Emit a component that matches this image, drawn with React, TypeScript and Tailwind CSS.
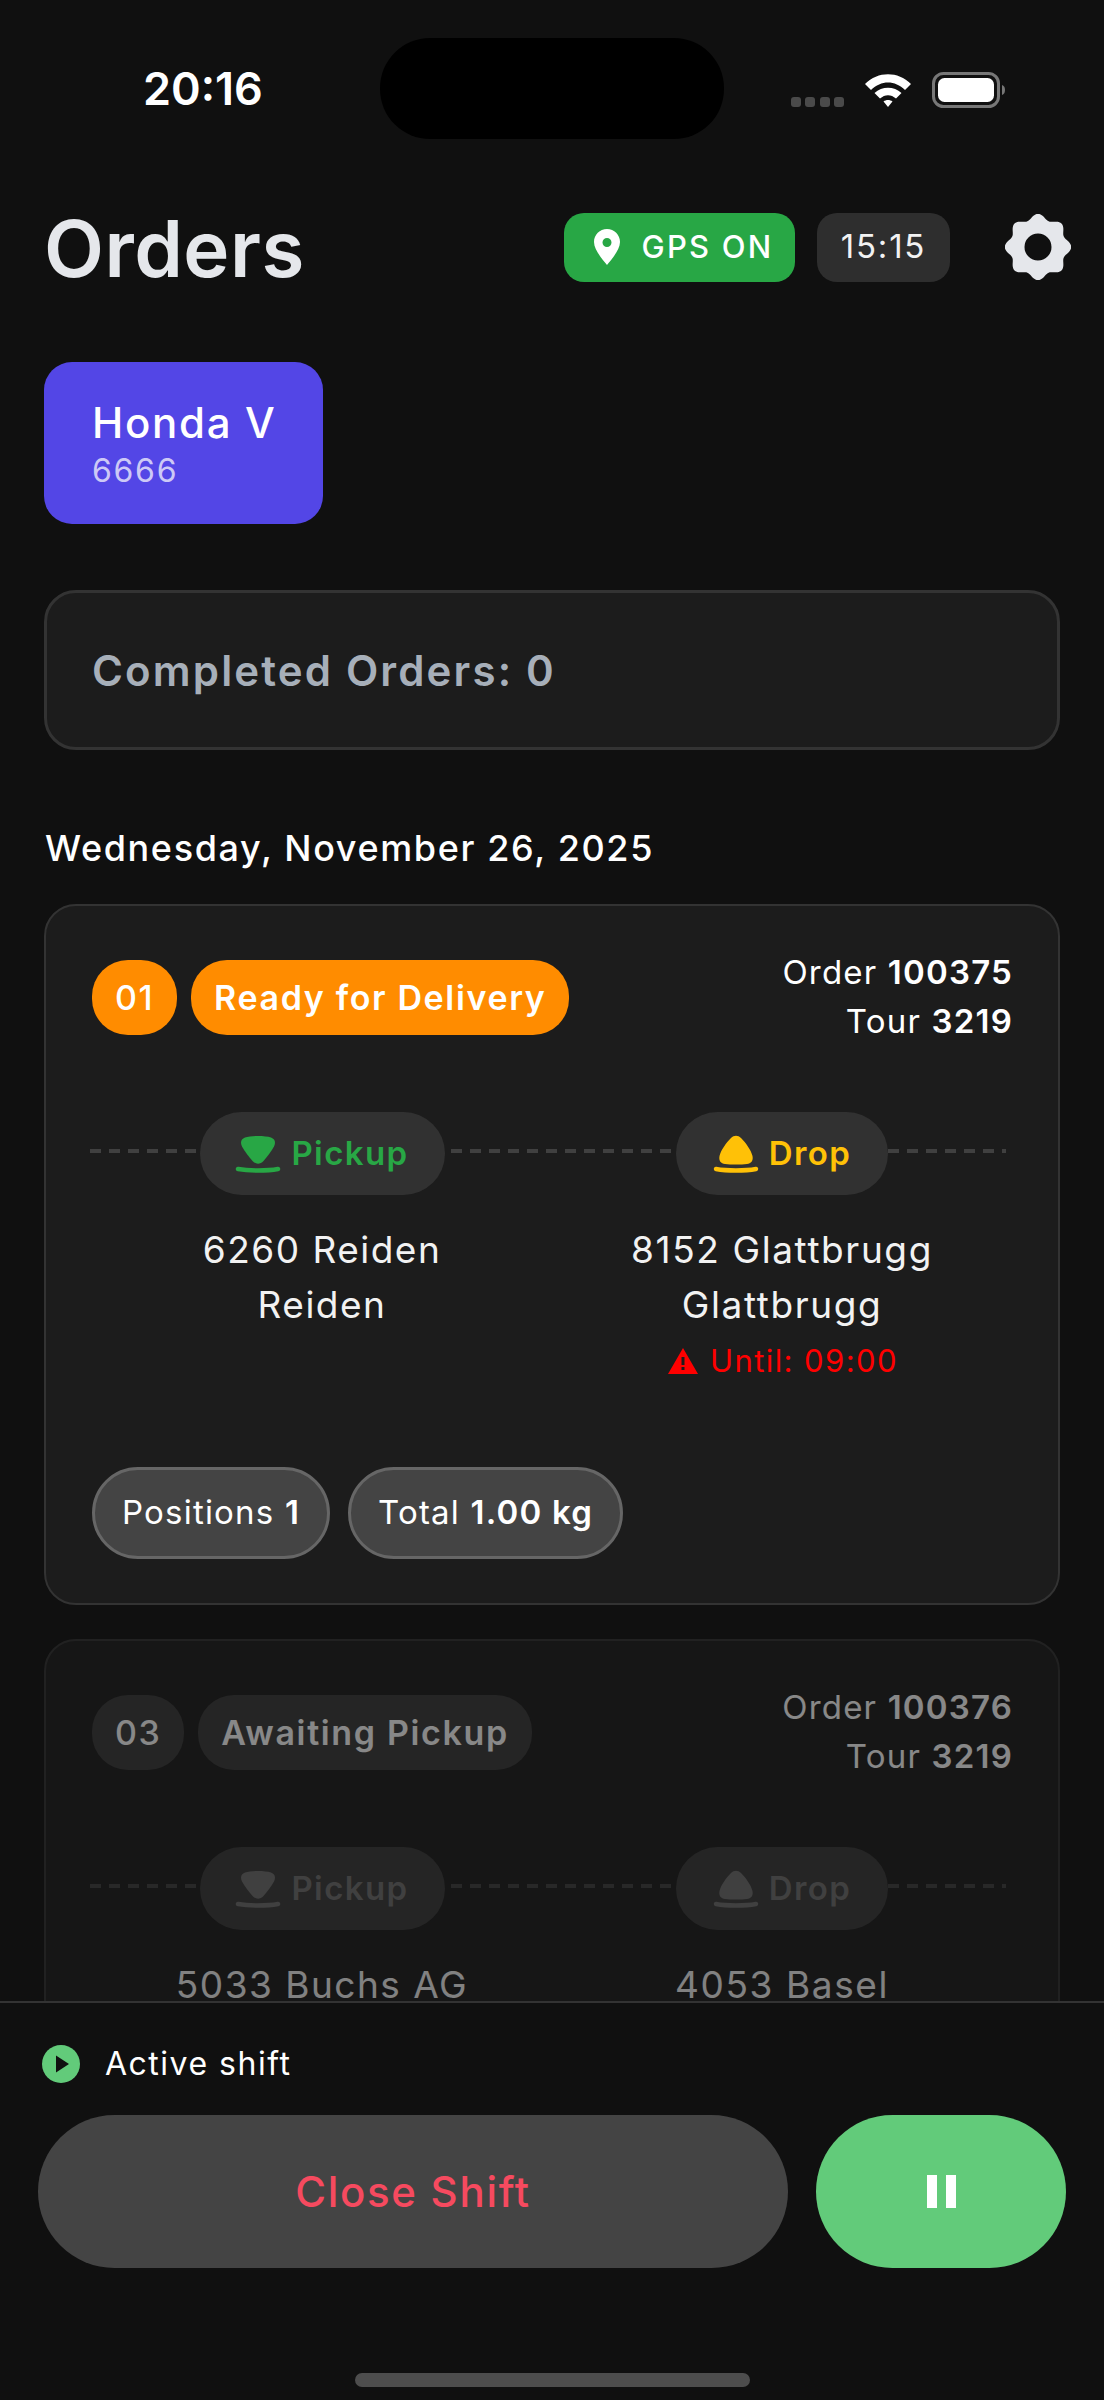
const gearPath = (() => {
  const pts: string[] = [];
  for (let i = 0; i < 160; i++) {
    const t = (i / 160) * Math.PI * 2;
    const r = 30.5 + 2.7 * Math.cos(8 * t);
    pts.push(`${(33 + r * Math.sin(t)).toFixed(2)} ${(33 - r * Math.cos(t)).toFixed(2)}`);
  }
  return `M${pts.join("L")}Z M33 19.5a13.5 13.5 0 1 0 0 27a13.5 13.5 0 1 0 0 -27Z`;
})();

const PickupIcon = ({ color }: { color: string }) => (
  <svg width="46" height="38" viewBox="0 0 46 38" className="shrink-0">
    <path d="M10 2.500 C16 0.500 30 0.500 36 2.500 C40 4 41 7.500 39 11.500 C36 17 32 22 28.500 26 C25 29.500 21 29.500 17.500 26 C14 22 10 17 7 11.500 C5 7.500 6 4 10 2.500Z" fill={color} />
    <path d="M3 34 C14 36 32 36 43 34" stroke={color} strokeWidth="4.500" strokeLinecap="round" fill="none" />
  </svg>
);

const DropIcon = ({ color }: { color: string }) => (
  <svg width="46" height="38" viewBox="0 0 46 38" className="shrink-0">
    <path d="M18 3 C21 0 25 0 28 3 C33 8 38 15 39.500 21 C40.500 26 38 28.500 34 29 C28 29.800 18 29.800 12 29 C8 28.500 5.500 26 6.500 21 C8 15 13 8 18 3Z" fill={color} />
    <path d="M3 34 C14 36 32 36 43 34" stroke={color} strokeWidth="4.500" strokeLinecap="round" fill="none" />
  </svg>
);

const Pill = ({ label, color, bg, kind, width }: { label: string; color: string; bg: string; kind: "pickup" | "drop"; width: string }) => (
  <div className={`relative flex h-[83px] items-center justify-center gap-[10px] rounded-full ${width}`} style={{ backgroundColor: bg }}>
    {kind === "pickup" ? <PickupIcon color={color} /> : <DropIcon color={color} />}
    <span className="text-[33px] font-semibold tracking-[1.400px]" style={{ color }}>{label}</span>
  </div>
);

type OrderProps = {
  num: string;
  status: string;
  order: string;
  pickup: string[];
  drop: string[];
  until?: boolean;
  dim?: boolean;
};

const OrderCard = ({ num, status, order, pickup, drop, until, dim }: OrderProps) => {
  const badgeBg = dim ? "#3a3a3a" : "#ff8c00";
  const pillBg = dim ? "#3a3a3a" : "#313131";
  return (
    <div className={`rounded-[32px] border-2 border-[#333] bg-[#1c1c1c] px-[46px] pt-[54px] pb-[44px] ${dim ? "opacity-50" : ""}`}>
      <div className="flex items-start justify-between">
        <div className="flex gap-[14px]">
          <div className="flex h-[75px] items-center rounded-[36px] px-[23px] text-[34px] font-medium tracking-[1.500px] text-white" style={{ backgroundColor: badgeBg }}>{num}</div>
          <div className="flex h-[75px] items-center rounded-[36px] px-[23px] text-[34px] font-semibold tracking-[1.640px] text-white" style={{ backgroundColor: badgeBg }}>{status}</div>
        </div>
        <div className="-mt-[12px] -mr-[1px] text-right text-[33px] leading-[49px] tracking-[1.200px] text-white">
          <div>Order <span className="font-semibold">{order}</span></div>
          <div>Tour <span className="font-semibold">3219</span></div>
        </div>
      </div>

      <div className="relative mt-[66px] grid grid-cols-2">
        <div className="absolute top-[37px] -left-[2px] right-[6px] h-[4px] bg-[repeating-linear-gradient(90deg,#404040_0_11px,transparent_11px_19px)]" />
        <div className="relative flex flex-col items-center">
          <Pill label="Pickup" kind="pickup" width="w-[245px]" bg={pillBg} color={dim ? "#707070" : "#28a745"} />
          <div className="mt-[27px] text-center text-[37px] leading-[55px] tracking-[1.500px] text-[#f2f2f2]">
            {pickup.map((t) => <div key={t}>{t}</div>)}
          </div>
        </div>
        <div className="relative flex flex-col items-center">
          <Pill label="Drop" kind="drop" width="w-[212px]" bg={pillBg} color={dim ? "#707070" : "#ffc107"} />
          <div className="mt-[27px] text-center text-[37px] leading-[55px] tracking-[1.600px] text-[#f2f2f2]">
            {drop.map((t) => <div key={t}>{t}</div>)}
          </div>
          {until && (
            <div className="mt-[7px] flex items-center gap-[12px] pl-[2px] text-[31px] leading-[44px] tracking-[1.400px] text-[#ff0000]">
              <svg width="30" height="26" viewBox="0 0 30 26">
                <path d="M15 0 L30 26 H0 Z M13.500 9 V17 H16.500 V9 Z M13.500 19 V22 H16.500 V19 Z" fill="#ff0000" fillRule="evenodd" />
              </svg>
              <span>Until: 09:00</span>
            </div>
          )}
        </div>
      </div>

      <div className="mt-[84px] flex gap-[18px]">
        <div className="flex h-[92px] items-center rounded-full border-[3px] border-[#666] bg-[#444] px-[27px] text-[33px] tracking-[1.200px] text-white">
          Positions&nbsp;<span className="font-semibold">1</span>
        </div>
        <div className="flex h-[92px] items-center rounded-full border-[3px] border-[#666] bg-[#444] px-[27px] text-[33px] tracking-[1.200px] text-white">
          Total&nbsp;<span className="font-semibold">1.00 kg</span>
        </div>
      </div>
    </div>
  );
};

const StatusBar = () => (
  <div className="flex h-[190px] shrink-0 justify-between pt-[38px] pr-[97px] pl-[143px]">
    <div className="mt-[28px] text-[45px] leading-[46px] font-semibold text-white">20:16</div>
    <div className="absolute top-[38px] left-[380px] h-[101px] w-[344px] rounded-[50px] bg-black" />
    <div className="flex items-start gap-[20px] pt-[34px]">
      <div className="mt-[25px] flex gap-[4.300px]">
        <span className="h-[10px] w-[10px] rounded-[3px] bg-[#4a4a4a]" />
        <span className="h-[10px] w-[10px] rounded-[3px] bg-[#4a4a4a]" />
        <span className="h-[10px] w-[10px] rounded-[3px] bg-[#4a4a4a]" />
        <span className="h-[10px] w-[10px] rounded-[3px] bg-[#4a4a4a]" />
      </div>
      <svg width="48" height="36" viewBox="0 0 48 36">
        <path d="M1 12 C14 -1 34 -1 47 12 L41 18 C31 8 17 8 7 18 Z" fill="#fff" />
        <path d="M10.500 21 C18 14 30 14 37.500 21 L32 26.500 C27 22 21 22 16 26.500 Z" fill="#fff" />
        <path d="M19.500 29.500 C22 27.500 26 27.500 28.500 29.500 L24 35 Z" fill="#fff" />
      </svg>
      <svg width="75" height="36" viewBox="0 0 75 36">
        <rect x="1.500" y="1.500" width="65" height="33" rx="10" fill="none" stroke="#777" strokeWidth="3" />
        <rect x="6" y="6" width="56" height="24" rx="6.500" fill="#fff" />
        <path d="M70 13 C74 14 74 22 70 23 Z" fill="#777" />
      </svg>
    </div>
  </div>
);

export default function App() {
  return (
    <div className="relative flex h-[2400px] w-[1104px] flex-col overflow-hidden bg-[#101010] font-['Inter',sans-serif]">
      <StatusBar />
      <main className="min-h-0 flex-1 overflow-hidden px-[44px] pt-[17px]">
        <header className="flex h-[80px] items-center justify-between">
          <h1 className="mt-[3px] text-[78px] leading-[77px] font-semibold tracking-[0.500px] text-[#e5e7eb]">Orders</h1>
          <div className="flex items-center">
            <div className="flex h-[69px] w-[231px] items-center justify-center gap-[22px] rounded-[20px] bg-[#28a745] pl-[8px] text-[31px] font-medium tracking-[2.200px] text-white">
              <svg width="26" height="36" viewBox="0 0 26 36">
                <path d="M13 0 C5.800 0 0 5.800 0 13 C0 21 9 31 13 36 C17 31 26 21 26 13 C26 5.800 20.200 0 13 0 Z M13 9 A4.500 4.500 0 1 1 13 18 A4.500 4.500 0 1 1 13 9 Z" fill="#fff" fillRule="evenodd" />
              </svg>
              GPS ON
            </div>
            <div className="ml-[22px] flex h-[69px] w-[133px] items-center justify-center rounded-[20px] bg-[#2e2e2e] text-[33px] font-normal tracking-[1.800px] text-[#f2f2f2]">15:15</div>
            <svg width="66" height="66" viewBox="0 0 66 66" className="mr-[-11px] ml-[55px]">
              <path d={gearPath} fill="#e5e7eb" fillRule="evenodd" />
            </svg>
          </div>
        </header>

        <div className="mt-[75px] flex h-[162px] w-[279px] flex-col justify-center rounded-[28px] bg-[#5346e6] pl-[48px]">
          <div className="text-[42px] leading-[54px] font-medium tracking-[1.700px] text-white">Honda V</div>
          <div className="mt-[2px] text-[32px] leading-[38px] tracking-[1.700px] text-[#cdc9f6]">6666</div>
        </div>

        <div className="mt-[66px] flex h-[160px] items-center rounded-[32px] border-[3px] border-[#333] bg-[#1c1c1c] pl-[45px] text-[42px] font-semibold tracking-[2.150px] text-[#a7afb9]">
          Completed Orders: 0
        </div>

        <div className="mt-[76px] mb-[34px] pl-[1px] text-[36px] leading-[44px] font-medium tracking-[1.630px] text-white">Wednesday, November 26, 2025</div>

        <div className="flex flex-col gap-[34px]">
          <OrderCard num="01" status="Ready for Delivery" order="100375" pickup={["6260 Reiden", "Reiden"]} drop={["8152 Glattbrugg", "Glattbrugg"]} until />
          <OrderCard num="03" status="Awaiting Pickup" order="100376" pickup={["5033 Buchs AG"]} drop={["4053 Basel"]} dim />
        </div>
      </main>

      <footer className="h-[399px] shrink-0 border-t-2 border-[#333] bg-[#101010] px-[38px]">
        <div className="mt-[37px] flex items-center gap-[25px] pl-[4px]">
          <svg width="38" height="38" viewBox="0 0 38 38">
            <circle cx="19" cy="19" r="19" fill="#62cb7a" />
            <path d="M14 10.500 L27 19 L14 27.500 Z" fill="#101010" />
          </svg>
          <span className="text-[32px] font-normal tracking-[1.500px] text-white">Active shift</span>
        </div>
        <div className="mt-[27px] flex gap-[28px]">
          <button className="flex h-[153px] w-[750px] items-center justify-center rounded-full bg-[#444] text-[42px] font-medium tracking-[1.700px] text-[#f64a5f]">Close Shift</button>
          <button className="flex h-[153px] w-[250px] items-center justify-center gap-[9px] rounded-full bg-[#62cb7a]">
            <span className="h-[33px] w-[10px] bg-white" />
            <span className="h-[33px] w-[10px] bg-white" />
          </button>
        </div>
        <div className="mx-auto mt-[105px] h-[14px] w-[395px] rounded-full bg-[#4d4d4d]" />
      </footer>
    </div>
  );
}
